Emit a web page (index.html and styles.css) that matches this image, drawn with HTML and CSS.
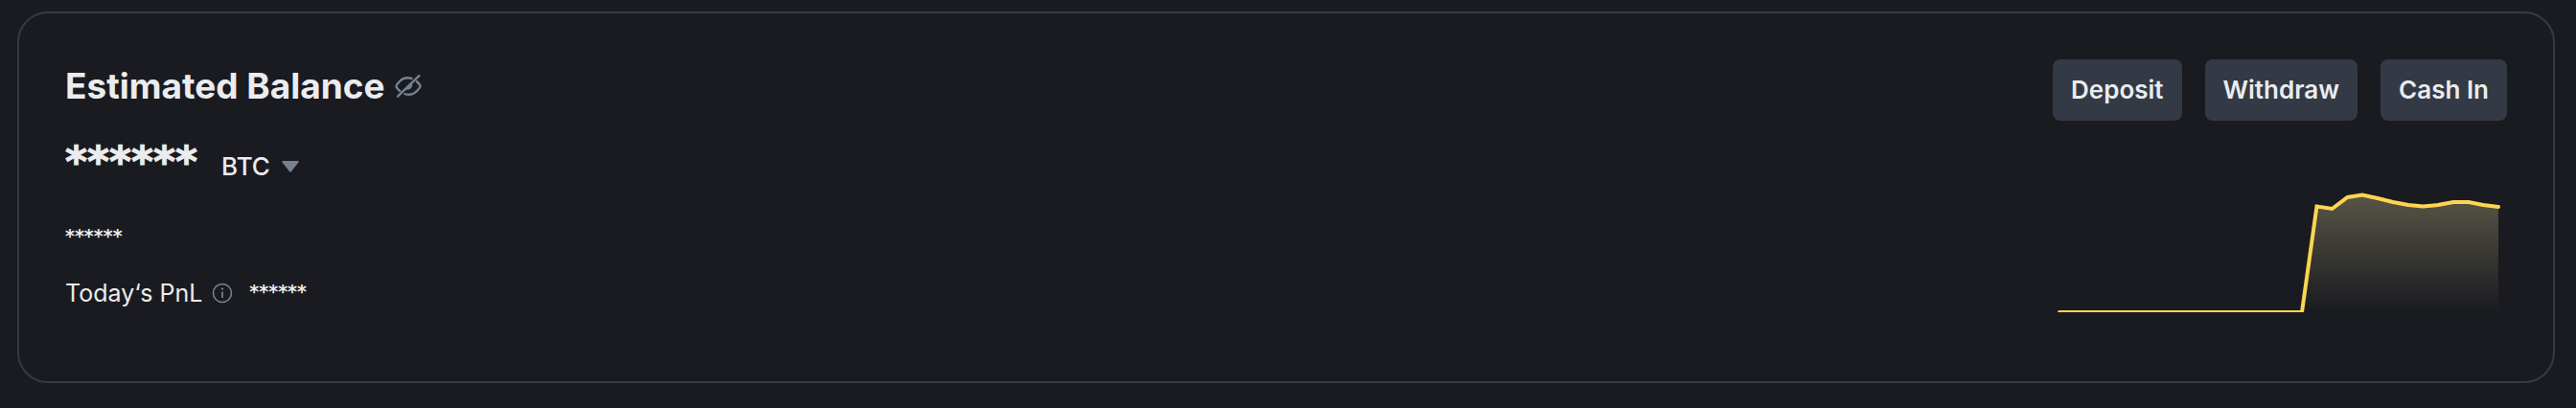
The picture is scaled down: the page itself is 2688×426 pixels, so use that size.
FILE: index.html
```html
<!DOCTYPE html>
<html lang="en">
<head>
<meta charset="utf-8">
<title>Estimated Balance</title>
<link rel="stylesheet" href="styles.css">
</head>
<body>
<main class="page">
  <section class="card">
    <div class="summary">
      <div class="title-row">
        <h1 class="title">Estimated Balance</h1>
        <button class="icon-button" type="button" aria-label="Show balance">
          <svg class="eye" viewBox="0 0 28 24" aria-hidden="true">
            <path d="M17.5 3.9C12 2.3 8.500 3.300 5.500 6.500C3 9 1.500 10.700 1.500 12C1.500 13.300 2.800 14.800 5.200 17M10.500 20.200C15.800 21.700 19.500 20.500 22.500 17.500C25 15 26.500 13.300 26.500 12C26.500 10.700 25.200 9.200 22.800 7" fill="none" stroke="currentColor" stroke-width="2.400" stroke-linecap="round"/>
            <path d="M3 22.700L25.300 1.200" stroke="currentColor" stroke-width="2.400" stroke-linecap="round"/>
            <path d="M10.500 15.500L18 8.300C19.200 13 16 17 10.500 15.500Z" fill="currentColor"/>
          </svg>
        </button>
      </div>
      <div class="balance-row">
        <span class="balance">******</span>
        <button class="unit" type="button">BTC
          <svg class="caret" viewBox="0 0 18 12" aria-hidden="true"><path d="M1.300 0H16.700Q18.200 .4 17.300 1.800L10 11Q9 12.400 8 11L.7 1.800Q-.2 .4 1.300 0Z" fill="currentColor"/></svg>
        </button>
      </div>
      <p class="fiat">******</p>
      <div class="pnl">
        <span>Today‘s PnL</span>
        <svg class="info" viewBox="0 0 22 22" aria-hidden="true">
          <circle cx="11" cy="11" r="9.500" fill="none" stroke="currentColor" stroke-width="1.600"/>
          <path d="M11 9.500V16" stroke="currentColor" stroke-width="1.800"/>
          <circle cx="11" cy="6.600" r="1.200" fill="currentColor"/>
        </svg>
        <span class="stars">******</span>
      </div>
    </div>
    <div class="side">
      <div class="actions">
        <button class="action" type="button">Deposit</button>
        <button class="action" type="button">Withdraw</button>
        <button class="action" type="button">Cash In</button>
      </div>
      <svg class="chart" viewBox="0 0 476 132" role="img" aria-label="Balance history">
        <defs>
          <linearGradient id="fill" x1="0" y1="0" x2="0" y2="1">
            <stop offset="0" stop-color="#e8d99e" stop-opacity=".3"/>
            <stop offset="1" stop-color="#e8d99e" stop-opacity="0"/>
          </linearGradient>
        </defs>
        <path d="M262 132L277.500 21.500L293.500 24L309.500 12L325 9.500L341 13L357 17L373 20L388.500 21.500L404 20L420 17H436L451 20L467 22V132Z" fill="url(#fill)"/>
        <path d="M9 132H262L277.500 21.500L293.500 24L309.500 12L325 9.500L341 13L357 17L373 20L388.500 21.500L404 20L420 17H436L451 20L467 22" fill="none" stroke="#fcd650" stroke-width="4" stroke-linecap="round"/>
      </svg>
    </div>
  </section>
</main>
</body>
</html>
```
FILE: styles.css
```css
* {
  box-sizing: border-box;
}

body {
  margin: 0;
  background: #1a1b20;
  color: #eaecef;
  font-family: Inter, "Liberation Sans", sans-serif;
  font-size: 25px;
  line-height: 36px;
}

button {
  border: 0;
  padding: 0;
  background: none;
  color: inherit;
  font: inherit;
  cursor: pointer;
}

svg {
  display: block;
  flex: none;
}

.page {
  padding: 12px 22px 26px 18px;
}

.card {
  display: flex;
  justify-content: space-between;
  padding: 48px 48px 72px;
  border: 2px solid #333b47;
  border-radius: 32px;
}

.title-row {
  display: flex;
  align-items: center;
  gap: 10px;
}

.title {
  margin: 0;
  font-size: 37px;
  line-height: 56px;
  font-weight: 700;
}

.icon-button,
.caret,
.info {
  color: #76808f;
}

.eye {
  width: 28px;
  height: 24px;
}

.balance-row {
  display: flex;
  align-items: flex-start;
  gap: 25px;
  padding-top: 28px;
}

.balance,
.fiat,
.stars {
  font-family: "DejaVu Sans", sans-serif;
  font-weight: 700;
}

.balance {
  font-size: 44px;
  line-height: 46px;
  -webkit-text-stroke: 1px currentColor;
}

.unit {
  display: flex;
  align-items: center;
  gap: 12px;
  padding: 10px 0;
  font-size: 26px;
  font-weight: 500;
}

.caret {
  width: 18px;
  height: 12px;
}

.fiat {
  margin: 26px 0 0;
}

.fiat,
.stars {
  font-size: 19px;
}

.pnl {
  display: flex;
  align-items: center;
  padding-top: 24px;
}

.info {
  width: 22px;
  height: 22px;
  margin: 0 17px 0 10px;
}

.stars {
  align-self: flex-start;
  line-height: 32px;
}

.side {
  display: flex;
  flex-direction: column;
  align-items: flex-end;
  gap: 68px;
}

.actions {
  display: flex;
  gap: 24px;
}

.action {
  padding: 14px 19px;
  border-radius: 8px;
  background: #333a45;
  font-size: 26px;
  font-weight: 600;
}

.chart {
  width: 476px;
  height: 132px;
}
```
